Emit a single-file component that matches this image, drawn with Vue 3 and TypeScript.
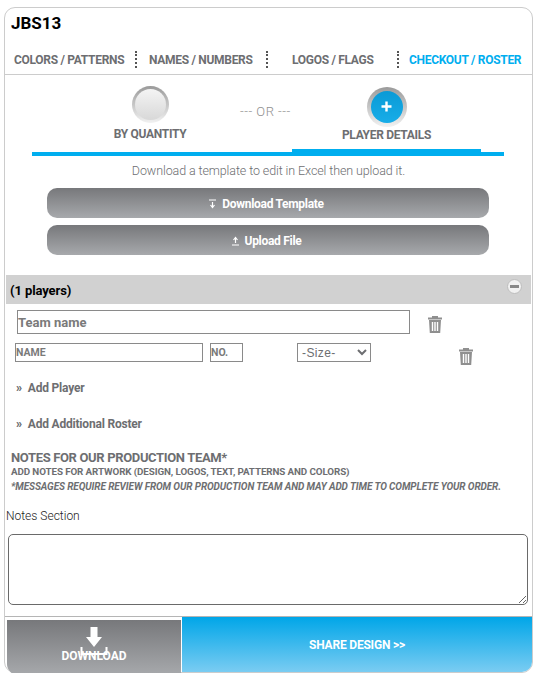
<script setup lang="ts">
const tabs = [
  { label: 'COLORS / PATTERNS', active: false, sep: true },
  { label: 'NAMES / NUMBERS', active: false, sep: true },
  { label: 'LOGOS / FLAGS', active: false, sep: true },
  { label: 'CHECKOUT / ROSTER', active: true, sep: false },
]
</script>

<template>
  <div class="card">
    <h1 class="title">JBS13</h1>
    <nav class="tabs">
      <template v-for="t in tabs" :key="t.label">
        <span class="tab" :class="{ active: t.active }">{{ t.label }}</span>
        <i v-if="t.sep" class="sep"></i>
      </template>
    </nav>

    <div class="choice">
      <div class="opt opt-left">
        <div class="radio"></div>
        <div class="opt-label">BY QUANTITY</div>
      </div>
      <div class="or">--- OR ---</div>
      <div class="opt opt-right">
        <div class="radio on">
          <svg width="13" height="13" viewBox="0 0 13 13"><path d="M6.500 1.500v10M1.500 6.500h10" stroke="#fff" stroke-width="2.400" fill="none"/></svg>
        </div>
        <div class="opt-label">PLAYER DETAILS</div>
      </div>
    </div>

    <p class="hint">Download a template to edit in Excel then upload it.</p>
    <div class="actions">
      <button class="btn">
        <svg width="9" height="10" viewBox="0 0 9 10"><path d="M1 1h7M4.500 3v5M2.500 6l2 2.500 2-2.500" fill="none" stroke="#fff" stroke-width="1.200"/></svg>
        <span>Download Template</span>
      </button>
      <button class="btn">
        <svg width="9" height="10" viewBox="0 0 9 10"><path d="M1 9h7M4.500 7V2M2.500 4l2-2.500 2 2.500" fill="none" stroke="#fff" stroke-width="1.200"/></svg>
        <span>Upload File</span>
      </button>
    </div>

    <div class="bar">
      <span>(1 players)</span>
      <span class="minus"><i></i></span>
    </div>

    <div class="team-row">
      <input class="field team" placeholder="Team name" />
      <svg class="trash" width="14" height="17" viewBox="0 0 14 17"><path d="M0 1.500h14v2H0zM4 0h6v1.500H4zM1 4h12l-.8 13H1.800zM3.800 6v9h1.400V6zM6.300 6v9h1.400V6zM8.800 6v9h1.400V6z" fill="#8f8f8f" fill-rule="evenodd"/></svg>
    </div>
    <div class="player-row">
      <input class="field name" placeholder="NAME" />
      <input class="field num" placeholder="NO." />
      <select class="size"><option>-Size-</option></select>
      <svg class="trash" width="14" height="17" viewBox="0 0 14 17"><path d="M0 1.500h14v2H0zM4 0h6v1.500H4zM1 4h12l-.8 13H1.800zM3.800 6v9h1.400V6zM6.300 6v9h1.400V6zM8.800 6v9h1.400V6z" fill="#8f8f8f" fill-rule="evenodd"/></svg>
    </div>

    <div class="link first"><b>»</b> Add Player</div>
    <div class="link second"><b>»</b> Add Additional Roster</div>

    <div class="notes">
      <h2>NOTES FOR OUR PRODUCTION TEAM*</h2>
      <p class="n1">ADD NOTES FOR ARTWORK (DESIGN, LOGOS, TEXT, PATTERNS AND COLORS)</p>
      <p class="n2">*MESSAGES REQUIRE REVIEW FROM OUR PRODUCTION TEAM AND MAY ADD TIME TO COMPLETE YOUR ORDER.</p>
    </div>
    <label class="notes-label">Notes Section</label>
    <textarea class="area"></textarea>

    <div class="footer">
      <div class="dl">
        <svg class="dl-icon" width="28" height="30" viewBox="0 0 28 30"><path d="M10.500 0h7v10H22l-8 10-8-10h4.500z" fill="#fff"/><path d="M1.500 20v7h25v-7" fill="none" stroke="#fff" stroke-width="2"/></svg>
        <span>DOWNLOAD</span>
      </div>
      <div class="share">SHARE DESIGN &gt;&gt;</div>
    </div>
  </div>
</template>

<style>
body { background: #fff; }
</style>

<style scoped>
.card {
  box-sizing: border-box;
  width: 529px;
  height: 666px;
  margin: 7px 0 0 4px;
  border: 1px solid #ccc;
  border-radius: 11px;
  font-family: Roboto, "Open Sans", sans-serif;
  color: #6d6e71;
  display: flex;
  flex-direction: column;
}
.title {
  margin: 5px 0 0 6px;
  font-size: 17px;
  line-height: 21px;
  font-weight: 700;
  color: #000;
  height: 31px;
}
.tabs {
  display: flex;
  align-items: center;
  height: 31px;
  border-bottom: 1px solid #ccc;
  padding: 2px 0 0 9px;
  box-sizing: border-box;
  font-size: 12px;
  font-weight: 700;
  letter-spacing: -0.300px;
}
.tab { white-space: nowrap; }
.tab:nth-of-type(1) { width: 121px; }
.tab:nth-of-type(2) { width: 117px; margin-left: 12px; }
.tab:nth-of-type(3) { width: 105px; margin-left: 24px; }
.tab:nth-of-type(4) { margin-left: 10px; }
.tab.active { color: #00aeef; }
.sep {
  display: block;
  width: 0;
  height: 17px;
  border-left: 2px dotted #555;
}
.choice {
  display: flex;
  height: 81px;
  box-sizing: border-box;
  margin: 0 28px 0 27px;
  border-bottom: 4px solid #00aeef;
}
.opt { display: flex; flex-direction: column; align-items: center; box-sizing: border-box; }
.opt-left { width: 236px; padding-top: 11px; }
.opt-right {
  width: 189px;
  height: 81px;
  padding-top: 12px;
  margin-left: 24px;
  border-bottom: 7px solid #00aeef;
}
.or {
  width: 0;
  white-space: nowrap;
  font-size: 13px;
  line-height: 16px;
  padding-top: 29px;
  color: #909090;
  font-weight: 300;
  letter-spacing: 0.500px;
  transform: translateX(-28px);
}
.radio {
  box-sizing: border-box;
  width: 37px;
  height: 37px;
  border-radius: 50%;
  border: 3px solid transparent;
  background:
    linear-gradient(#f4f4f4, #d8d8d8) padding-box,
    linear-gradient(#9a9a9a, #f2f2f2) border-box;
}
.radio.on {
  width: 40px;
  height: 40px;
  border-width: 4px;
  background:
    linear-gradient(#0a9ad6, #18ade8) padding-box,
    linear-gradient(#9a9a9a, #f2f2f2) border-box;
  display: flex;
  align-items: center;
  justify-content: center;
}
.opt-label {
  font-size: 12px;
  font-weight: 700;
  letter-spacing: -0.300px;
  line-height: 15px;
  margin-top: 4px;
  white-space: nowrap;
}
.opt-right .opt-label { margin-top: 1px; }
.hint {
  margin: 7px 0 0;
  text-align: center;
  font-size: 12.500px;
  line-height: 16px;
  font-weight: 300;
  color: #6d6e71;
  letter-spacing: -0.100px;
}
.actions {
  display: flex;
  flex-direction: column;
  gap: 7px;
  margin: 9px 43px 0 42px;
}
.btn {
  height: 30px;
  border: 0;
  border-radius: 10px;
  background: linear-gradient(#77787b, #a7a9ac);
  color: #fff;
  font-family: inherit;
  font-size: 12px;
  font-weight: 700;
  display: flex;
  align-items: center;
  justify-content: center;
  gap: 5px;
  letter-spacing: -0.300px;
  padding: 2px 4px 0 0;
}
.bar {
  margin: 20px 1px 0 1px;
  height: 29px;
  background: #d1d1d1;
  color: #000;
  font-size: 13px;
  font-weight: 700;
  padding: 1px 9px 0 4px;
  display: flex;
  align-items: center;
  justify-content: space-between;
  letter-spacing: -0.100px;
}
.minus {
  width: 15px;
  height: 15px;
  border-radius: 50%;
  background: #f1f1f1;
  border: 1px solid #bdbdbd;
  box-sizing: border-box;
  display: flex;
  align-items: center;
  justify-content: center;
  transform: translateY(-4px);
}
.minus i { display: block; width: 9px; height: 3px; background: #888; }
.team-row { display: flex; margin: 6px 0 0 12px; height: 24px; }
.field {
  box-sizing: border-box;
  border: 1px solid #8a8a8a;
  border-radius: 0;
  background: #fff;
  font-family: inherit;
  font-weight: 700;
  color: #6d6e71;
  padding: 0;
  outline: none;
}
.field::placeholder { color: #7a7a7a; opacity: 1; }
.team { width: 393px; height: 24px; font-size: 13px; }
.team-row .trash { margin: 6px 0 0 18px; }
.player-row { display: flex; margin: 9px 0 0 10px; height: 20px; }
.name { width: 188px; height: 19px; font-size: 10.500px; }
.num { width: 33px; height: 19px; font-size: 10.500px; margin-left: 7px; }
.size {
  box-sizing: border-box;
  width: 74px;
  height: 19px;
  margin-left: 54px;
  border: 1px solid #8a8a8a;
  background: #fff;
  border-radius: 0;
  font-family: "Liberation Sans", sans-serif;
  font-size: 12px;
  letter-spacing: 0.400px;
  color: #6d6e71;
  padding: 0;
}
.player-row .trash { margin: 5px 0 0 88px; }
.link {
  font-size: 12px;
  font-weight: 700;
  margin-left: 11px;
  line-height: 16px;
  letter-spacing: -0.200px;
  white-space: nowrap;
}
.link b { margin-right: 3px; }
.link.first { margin-top: 17px; }
.link.second { margin-top: 20px; }
.notes { margin: 18px 0 0 6px; white-space: nowrap; font-weight: 700; }
.notes h2 { margin: 0; font-size: 13px; line-height: 15px; font-weight: 700; letter-spacing: -0.350px; }
.notes p { margin: 0; line-height: 12px; letter-spacing: -0.100px; }
.notes .n1 { margin-top: 1px; font-size: 9.800px; }
.notes .n2 { font-style: italic; margin-top: 3px; font-size: 10px; }
.notes-label {
  display: block;
  margin: 15px 0 0 1px;
  font-size: 12px;
  line-height: 16px;
  color: #222;
  font-weight: 300;
}
.area {
  display: block;
  box-sizing: border-box;
  width: 520px;
  height: 71px;
  margin: 10px 0 0 3px;
  border: 1px solid #6a6a6a;
  border-radius: 5px;
  background: #fff;
  outline: none;
}
.footer {
  flex: 1;
  margin-top: 11px;
  border-top: 1px solid #b5b5b5;
  display: flex;
  font-weight: 700;
  color: #fff;
}
.dl {
  width: 174px;
  height: 55px;
  margin: 3px 0 -3px 2px;
  background: linear-gradient(#77787b, #a7a9ac);
  border-bottom-left-radius: 11px;
  display: flex;
  flex-direction: column;
  align-items: center;
  font-size: 12px;
  box-sizing: border-box;
  padding-top: 7px;
}
.dl-icon { display: block; }
.dl span { margin-top: -8px; }
.share {
  flex: 1;
  margin-left: 1px;
  background: linear-gradient(#00a6e8, #7accf2);
  border-bottom-right-radius: 10px;
  display: flex;
  align-items: center;
  justify-content: center;
  font-size: 12px;
  letter-spacing: -0.200px;
}
</style>
